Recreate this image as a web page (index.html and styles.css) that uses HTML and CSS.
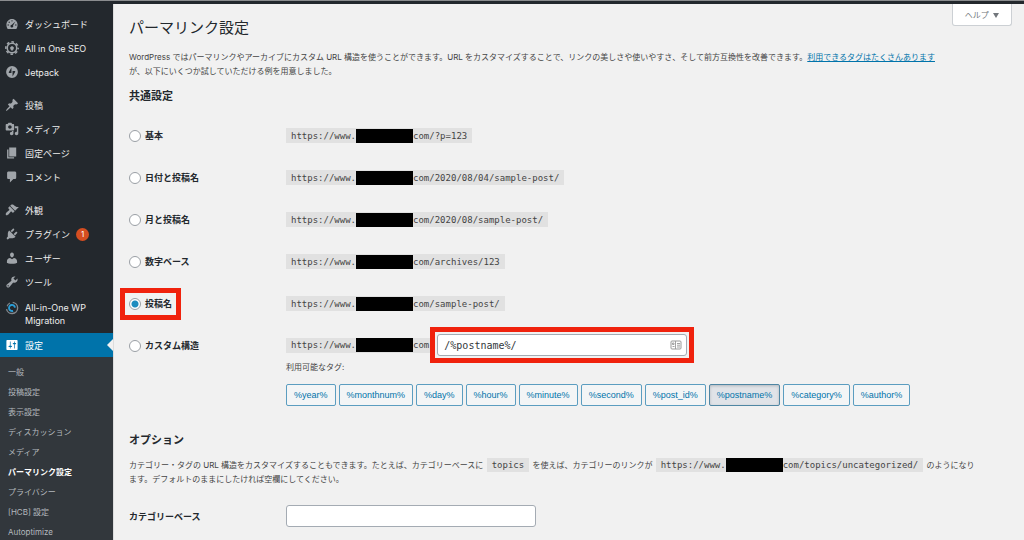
FILE: index.html
```html
<!DOCTYPE html>
<html lang="ja">
<head>
	<meta charset="utf-8">
	<title>パーマリンク設定</title>
	<link rel="stylesheet" href="styles.css">
</head>
<body>
	<div class="adminbar"></div>
	<div class="layout">
		<nav class="menu">
			<ul class="menu-list">
				<li><a href="#">
					<svg class="icon" viewBox="0 0 20 20"><path d="M3.8 17h12.4c1.2-1.6 1.8-3.500 1.800-5.500C18 6.500 14.400 3 10 3s-8 3.500-8 8.500c0 2 .6 3.900 1.800 5.500z"/><g class="cut"><circle cx="10" cy="5.500" r="1"/><circle cx="6" cy="7.500" r="1"/><circle cx="4.500" cy="11.500" r="1"/><circle cx="15.500" cy="11.500" r="1"/><path d="M14.800 6.500l-3.300 5.500a2 2 0 1 1-1.700-1z"/></g></svg>
					<span>ダッシュボード</span></a></li>
				<li><a href="#">
					<svg class="icon" viewBox="0 0 20 20"><circle cx="10" cy="10" r="6.800" fill="none" stroke="currentColor" stroke-width="2.200"/><circle cx="10" cy="10" r="8.800" fill="none" stroke="currentColor" stroke-width="2.200" stroke-dasharray="3.800 3.110" stroke-dashoffset="1.900"/><path d="M7.500 8.500h1V7h1v1.500h1V7h1v1.500h1V11a2 2 0 0 1-1.700 1.800V14H9.200v-1.200A2 2 0 0 1 7.500 11z"/></svg>
					<span>All in One SEO</span></a></li>
				<li><a href="#">
					<svg class="icon" viewBox="-3 -3 38 38"><path fill-rule="evenodd" d="M16 0a16 16 0 1 0 0 32 16 16 0 0 0 0-32zM14.500 19H9.500c-2 0-3-1.500-2-3.300l7-11.700zM17.500 13h5c2 0 3 1.500 2 3.300l-7 11.700z"/></svg>
					<span>Jetpack</span></a></li>
			</ul>
			<ul class="menu-list">
				<li><a href="#">
					<svg class="icon" viewBox="0 0 20 20"><path d="M10.440 3.020l1.820-1.820 6.360 6.350-1.830 1.820c-1.050-.68-2.480-.57-3.410.36l-.75.75c-.92.93-1.040 2.350-.35 3.410l-1.830 1.820-2.410-2.410-2.800 2.790c-.42.42-3.380 2.710-3.800 2.290s1.860-3.390 2.280-3.810l2.790-2.790L4.100 9.360l1.830-1.820c1.050.69 2.480.57 3.400-.36l.75-.75c.93-.92 1.050-2.350.36-3.410z"/></svg>
					<span>投稿</span></a></li>
				<li><a href="#">
					<svg class="icon" viewBox="0 0 20 20"><path d="M13 11V4c0-.55-.45-1-1-1h-1.670L9 1H5L3.670 3H2c-.55 0-1 .45-1 1v7c0 .55.45 1 1 1h10c.55 0 1-.45 1-1zM7 4.500c1.380 0 2.500 1.120 2.500 2.500S8.380 9.500 7 9.500 4.500 8.380 4.500 7 5.620 4.500 7 4.500zM14 6h5v10.500c0 1.380-1.120 2.500-2.500 2.500S14 17.880 14 16.500s1.120-2.500 2.500-2.500c.17 0 .34.02.5.05V9h-3V6zm-4 8.050V13h2v3.500c0 1.380-1.120 2.500-2.500 2.500S7 17.880 7 16.500 8.120 14 9.500 14c.17 0 .34.02.5.05z"/></svg>
					<span>メディア</span></a></li>
				<li><a href="#">
					<svg class="icon" viewBox="0 0 20 20"><path d="M6 15V2h10v13H6zm-1 1h8v2H3V5h2v11z"/></svg>
					<span>固定ページ</span></a></li>
				<li><a href="#">
					<svg class="icon" viewBox="0 0 20 20"><path d="M5 2h9c1.100 0 2 .9 2 2v7c0 1.100-.9 2-2 2h-2l-5 5v-5H5c-1.100 0-2-.9-2-2V4c0-1.100.9-2 2-2z"/></svg>
					<span>コメント</span></a></li>
			</ul>
			<ul class="menu-list">
				<li><a href="#">
					<svg class="icon" viewBox="0 0 20 20"><path d="M14.480 11.060L7.410 3.990l1.500-1.500c.5-.56 2.300-.47 3.510.32 1.210.8 1.430 1.280 2.910 2.100 1.180.64 2.450 1.260 4.450.85zm-.71.71L6.700 4.700 4.930 6.470c-.39.39-.39 1.020 0 1.410l1.060 1.060c.39.39.39 1.030 0 1.420-.6.6-1.430 1.110-2.210 1.690-.35.26-.7.53-1.010.84C1.430 14.230.4 16.080 1.400 17.070c.99 1 2.840-.03 4.180-1.360.31-.31.58-.66.85-1.020.57-.78 1.080-1.610 1.690-2.210.39-.39 1.020-.39 1.410 0l1.060 1.060c.39.39 1.020.39 1.410 0z"/></svg>
					<span>外観</span></a></li>
				<li><a href="#">
					<svg class="icon" viewBox="0 0 20 20"><path d="M13.110 4.360L9.870 7.600 8 5.730l3.240-3.240c.35-.34 1.050-.2 1.560.32.52.51.66 1.210.31 1.550zm-8 1.770l.91-1.120 9.010 9.010-1.190.84c-.71.71-2.630 1.160-3.820 1.160H6.140L4.900 17.260c-.59.59-1.540.59-2.120 0-.59-.58-.59-1.530 0-2.120l1.240-1.240v-3.880c0-1.130.4-3.190 1.090-3.890zm7.260 3.970l3.240-3.240c.34-.35 1.040-.21 1.550.31.52.51.66 1.210.31 1.550l-3.240 3.250z"/></svg>
					<span>プラグイン</span><b class="count">1</b></a></li>
				<li><a href="#">
					<svg class="icon" viewBox="0 0 20 20"><path d="M10 9.250c-2.270 0-2.730-3.440-2.730-3.440C7 4.020 7.820 2 9.970 2c2.160 0 2.980 2.020 2.710 3.810 0 0-.41 3.440-2.680 3.440zm0 2.570L12.720 10c2.390 0 4.520 2.330 4.520 4.530v2.490s-3.650 1.130-7.240 1.130c-3.650 0-7.240-1.130-7.240-1.130v-2.490c0-2.250 1.940-4.480 4.470-4.480z"/></svg>
					<span>ユーザー</span></a></li>
				<li><a href="#">
					<svg class="icon" viewBox="0 0 20 20"><path d="M16.680 9.770c-1.340 1.340-3.300 1.670-4.950.99l-5.410 6.520c-.99.99-2.590.99-3.580 0s-.99-2.590 0-3.570l6.520-5.420c-.68-1.650-.35-3.610.99-4.950 1.280-1.280 3.120-1.620 4.720-1.060l-2.890 2.890 2.820 2.820 2.860-2.870c.53 1.580.18 3.390-1.080 4.650zM3.810 16.210c.4.39 1.040.39 1.430 0 .4-.4.4-1.040 0-1.430-.39-.4-1.030-.4-1.430 0-.39.39-.39 1.030 0 1.430z"/></svg>
					<span>ツール</span></a></li>
				<li><a href="#" class="tall">
					<svg class="icon" viewBox="0 0 20 20"><path d="M11 2a8 8 0 1 1-8.800 9.500" fill="none" stroke="#82878c" stroke-width="2"/><path d="M11.500 14a4.300 4.300 0 1 1 2.800-4.500" fill="none" stroke="#2a9fd8" stroke-width="2.600"/><path d="M3 7.500A8 8 0 0 1 7 2.800" fill="none" stroke="#82878c" stroke-width="1.500"/></svg>
					<span>All-in-One WP Migration</span></a></li>
				<li><a href="#" class="current">
					<svg class="icon" viewBox="0 0 20 20"><path d="M18 16V4c0-.55-.45-1-1-1H3c-.55 0-1 .45-1 1v12c0 .55.45 1 1 1h14c.55 0 1-.45 1-1zM8 11h1c.55 0 1 .45 1 1s-.45 1-1 1H8v1.500c0 .28-.22.5-.5.5s-.5-.22-.5-.5V13H6c-.55 0-1-.45-1-1s.45-1 1-1h1V5.500c0-.28.22-.5.5-.5s.5.22.5.5V11zm5-2h-1c-.55 0-1-.45-1-1s.45-1 1-1h1V5.500c0-.28.22-.5.5-.5s.5.22.5.5V7h1c.55 0 1 .45 1 1s-.45 1-1 1h-1v5.500c0 .28-.22.5-.5.5s-.5-.22-.5-.5V9z"/></svg>
					<span>設定</span></a></li>
			</ul>
			<ul class="submenu">
				<li><a href="#">一般</a></li>
				<li><a href="#">投稿設定</a></li>
				<li><a href="#">表示設定</a></li>
				<li><a href="#">ディスカッション</a></li>
				<li><a href="#">メディア</a></li>
				<li><a href="#" class="active">パーマリンク設定</a></li>
				<li><a href="#">プライバシー</a></li>
				<li><a href="#">[HCB] 設定</a></li>
				<li><a href="#">Autoptimize</a></li>
			</ul>
		</nav>

		<main class="content">
			<button type="button" class="help">ヘルプ <span class="caret"></span></button>
			<h1>パーマリンク設定</h1>
			<p>WordPress ではパーマリンクやアーカイブにカスタム URL 構造を使うことができます。URL をカスタマイズすることで、リンクの美しさや使いやすさ、そして前方互換性を改善できます。<a href="#">利用できるタグはたくさんあります</a><br>が、以下にいくつか試していただける例を用意しました。</p>

			<h2>共通設定</h2>
			<table class="form-table">
				<tr>
					<th><label><input type="radio" name="selection">基本</label></th>
					<td><code>https://www.<span class="redacted"></span>com/?p=123</code></td>
				</tr>
				<tr>
					<th><label><input type="radio" name="selection">日付と投稿名</label></th>
					<td><code>https://www.<span class="redacted"></span>com/2020/08/04/sample-post/</code></td>
				</tr>
				<tr>
					<th><label><input type="radio" name="selection">月と投稿名</label></th>
					<td><code>https://www.<span class="redacted"></span>com/2020/08/sample-post/</code></td>
				</tr>
				<tr>
					<th><label><input type="radio" name="selection">数字ベース</label></th>
					<td><code>https://www.<span class="redacted"></span>com/archives/123</code></td>
				</tr>
				<tr>
					<th><label class="marked"><input type="radio" name="selection" checked>投稿名</label></th>
					<td><code>https://www.<span class="redacted"></span>com/sample-post/</code></td>
				</tr>
				<tr>
					<th><label><input type="radio" name="selection">カスタム構造</label></th>
					<td>
						<div class="custom">
							<code>https://www.<span class="redacted"></span>com</code>
							<div class="field marked">
								<input type="text" class="text mono" value="/%postname%/" aria-label="カスタム構造">
								<svg class="autofill" viewBox="0 0 12 10"><rect x="1" y="1" width="10" height="8" rx="1" fill="none" stroke="#999" stroke-width="1"/><path d="M5.500 1v8M7 3.500h3M7 5.200h3M7 7h3M2.500 3h1.500v1.500H2.500zM2.500 6.500h2" fill="none" stroke="#999" stroke-width=".9"/></svg>
							</div>
						</div>
						<div class="tags-label">利用可能なタグ:</div>
						<div class="tags">
							<button type="button">%year%</button>
							<button type="button">%monthnum%</button>
							<button type="button">%day%</button>
							<button type="button">%hour%</button>
							<button type="button">%minute%</button>
							<button type="button">%second%</button>
							<button type="button">%post_id%</button>
							<button type="button" class="pressed">%postname%</button>
							<button type="button">%category%</button>
							<button type="button">%author%</button>
						</div>
					</td>
				</tr>
			</table>

			<h2 class="options">オプション</h2>
			<p>カテゴリー・タグの URL 構造をカスタマイズすることもできます。たとえば、カテゴリーベースに <code>topics</code> を使えば、カテゴリーのリンクが <code>https://www.<span class="redacted"></span>com/topics/uncategorized/</code> のようになり<br>ます。デフォルトのままにしたければ空欄にしてください。</p>
			<table class="form-table">
				<tr>
					<th><label for="category_base">カテゴリーベース</label></th>
					<td><input type="text" class="text" id="category_base"></td>
				</tr>
			</table>
		</main>
	</div>
</body>
</html>
```
FILE: styles.css
```css
* {
	box-sizing: border-box;
}
body {
	margin: 0;
	background: #f1f1f1;
	color: #444;
	font-family: Inter, "Noto Sans CJK JP", sans-serif;
	font-size: 8px;
	line-height: 14px;
}
ul {
	list-style: none;
	margin: 0;
	padding: 0;
}
a {
	color: #0073aa;
}
.adminbar {
	height: 4px;
	background: #23282d;
	border-top: 1px solid #8b8d8f;
}
.layout {
	display: flex;
	min-height: calc(100vh - 4px);
}

/* left menu */
.menu {
	flex: none;
	width: 113px;
	padding-top: 8px;
	background: #23282d;
}
.menu-list + .menu-list {
	margin-top: 9px;
}
.menu-list a {
	display: flex;
	align-items: center;
	gap: 6px;
	min-height: 24px;
	padding-left: 5px;
	color: #eee;
	font-size: 9px;
	line-height: 13px;
	text-decoration: none;
}
.menu-list a.tall {
	align-items: flex-start;
	padding: 7px 16px 6px 5px;
}
.menu-list a.current {
	position: relative;
	background: #0073aa;
	color: #fff;
}
.current::after {
	content: "";
	position: absolute;
	right: 0;
	top: 6px;
	border: 6px solid transparent;
	border-left-width: 0;
	border-right-color: #f1f1f1;
}
.icon {
	flex: none;
	width: 14px;
	height: 14px;
	fill: currentColor;
	color: #a0a5aa;
}
.current .icon {
	color: #fff;
}
.cut {
	fill: #23282d;
}
.count {
	width: 13px;
	height: 13px;
	border-radius: 50%;
	background: #d54e21;
	color: #fff;
	font-size: 8px;
	font-weight: normal;
	text-align: center;
}
.submenu {
	padding-top: 5px;
	background: #32373c;
}
.submenu a {
	display: block;
	padding-left: 8px;
	color: #b4b9be;
	line-height: 20px;
	text-decoration: none;
}
.submenu a.active {
	color: #fff;
	font-weight: bold;
}

/* content */
.content {
	position: relative;
	flex: 1;
	min-width: 0;
	padding: 14px 12px 0 15px;
	border-left: 1px solid #ddd;
}
.help {
	position: absolute;
	top: 0;
	right: 12px;
	height: 22px;
	padding: 0 12px;
	border: 1px solid #ccd0d4;
	border-top: 0;
	border-radius: 0 0 3px 3px;
	background: #fff;
	color: #72777c;
	font: inherit;
}
.caret {
	display: inline-block;
	margin-left: 2px;
	border: 3px solid transparent;
	border-top: 5px solid #72777c;
	border-bottom: 0;
}
h1 {
	margin: 0;
	color: #23282d;
	font-size: 15px;
	font-weight: normal;
	line-height: 20px;
}
h2 {
	margin: 11px 0 10px;
	color: #23282d;
	font-size: 11px;
	line-height: 15px;
}
h2.options {
	margin-top: 18px;
}
p {
	margin: 12px 0 0;
}
h2 + p {
	margin-top: 10px;
}
code {
	display: inline-flex;
	align-items: center;
	height: 15px;
	padding: 0 5px;
	background: #e1e1e1;
	font-family: "DejaVu Sans Mono", monospace;
	font-size: 9px;
}
p code {
	height: 14px;
	margin: 0 1px;
	vertical-align: bottom;
}
.redacted {
	width: 57px;
	height: 14px;
	background: #000;
}
.form-table {
	width: 100%;
	border-collapse: collapse;
	margin-top: 9px;
}
h2 + .form-table {
	margin-top: -1px;
}
p + .form-table {
	margin-top: 8px;
}
.form-table th, .form-table td {
	padding: 11px 0 9px;
	line-height: 22px;
	text-align: left;
	vertical-align: top;
}
.form-table th {
	width: 157px;
	color: #23282d;
	font-size: 9px;
}
.form-table td code {
	vertical-align: middle;
}
th label {
	display: inline-flex;
	align-items: center;
	gap: 4px;
	line-height: 14px;
	vertical-align: middle;
}
input[type=radio] {
	appearance: none;
	width: 12px;
	height: 12px;
	margin: 0;
	border: 1px solid #9a9fa5;
	border-radius: 50%;
	background: #fff;
}
input[type=radio]:checked {
	background: radial-gradient(circle, #1e8cbe 3px, #fff 4px);
}
.marked {
	outline: 5px solid #f0220d;
	outline-offset: 2px;
}
label.marked {
	outline-offset: 4px;
}
.custom {
	display: flex;
	align-items: center;
	gap: 3px;
}
.field {
	position: relative;
	display: flex;
}
.text {
	display: block;
	width: 250px;
	height: 22px;
	padding: 0 6px;
	border: 1px solid #a4abb3;
	border-radius: 3px;
	background: #fff;
	color: #32373c;
}
.mono {
	font-family: "DejaVu Sans Mono", monospace;
	font-size: 10px;
}
.autofill {
	position: absolute;
	right: 5px;
	top: 6px;
	width: 12px;
	height: 10px;
}
.tags-label {
	margin-top: 4px;
	line-height: 14px;
}
.tags {
	display: flex;
	flex-wrap: wrap;
	gap: 3px;
	margin-top: 10px;
}
.tags button {
	height: 22px;
	padding: 0 7px;
	border: 1px solid #5b9dc0;
	border-radius: 2px;
	background: #f3f5f6;
	color: #0073aa;
	font-family: "Liberation Sans", sans-serif;
	font-size: 9px;
}
.tags button.pressed {
	border-color: #4f86a3;
	background: #e0e3e8;
	box-shadow: inset 0 1px 3px #b4b9be;
}
```
